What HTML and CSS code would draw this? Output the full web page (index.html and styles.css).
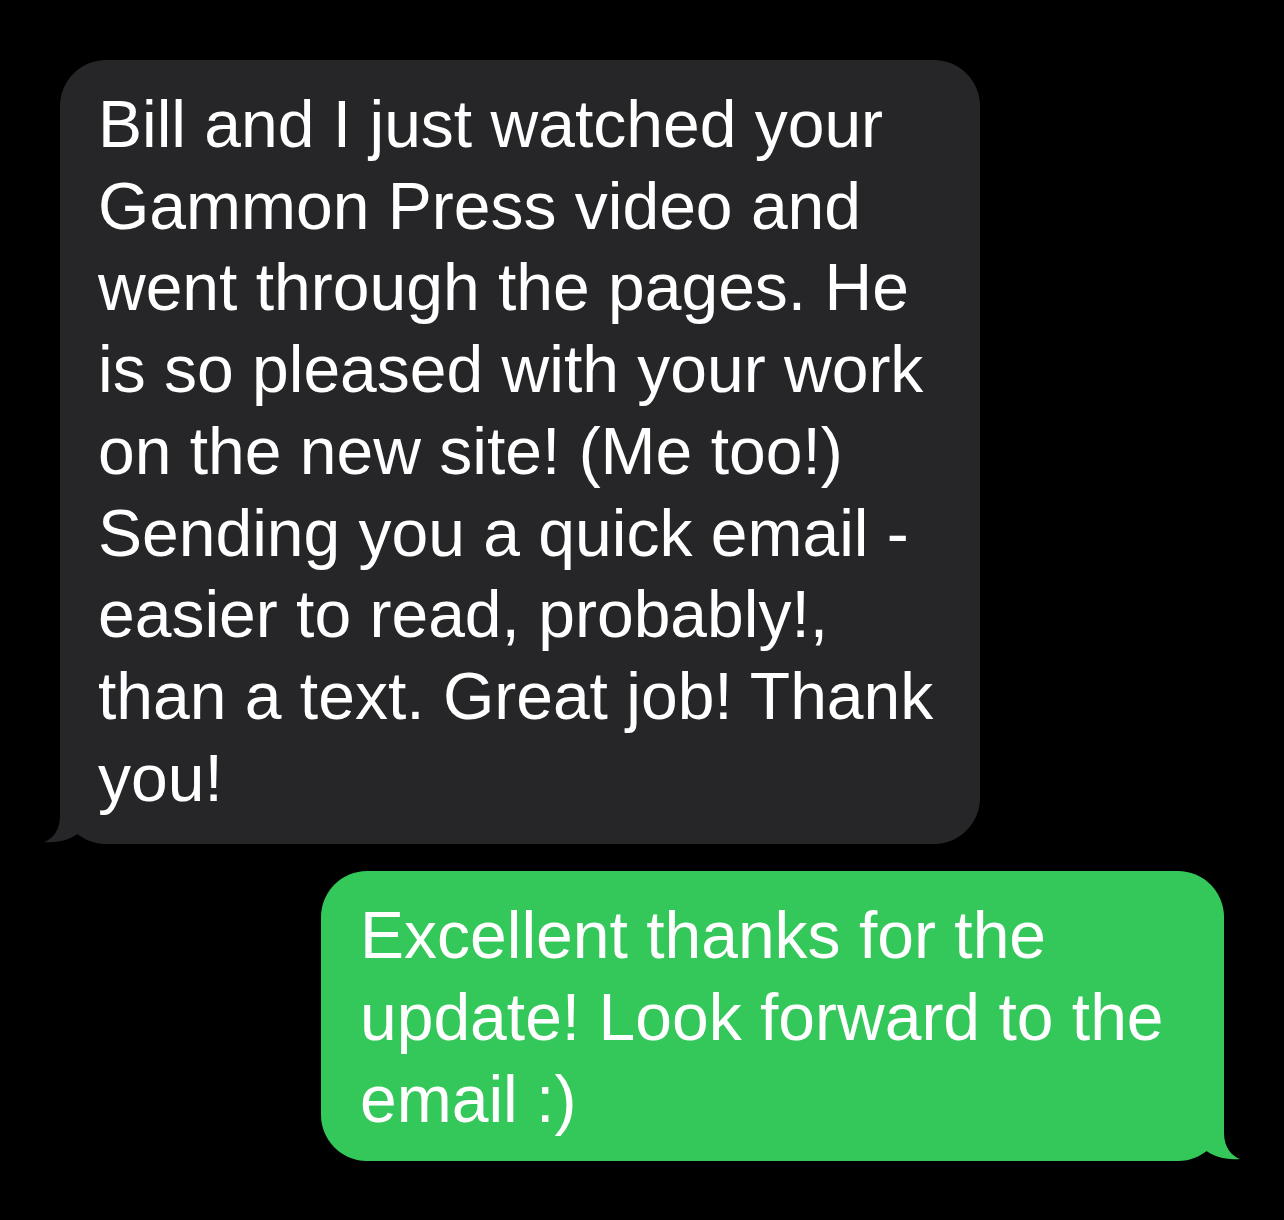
FILE: index.html
```html
<!DOCTYPE html>
<html lang="en">
<head>
<meta charset="utf-8">
<title>Messages</title>
<link rel="stylesheet" href="styles.css">
</head>
<body>
<main class="thread">
  <div class="bubble received">
    <p class="msg">Bill and I just watched your<br>Gammon Press video and<br>went through the pages. He<br>is so pleased with your work<br>on the new site! (Me too!)<br>Sending you a quick email -<br>easier to read, probably!,<br>than a text. Great job! Thank<br>you!</p>
    <svg class="tail tail-left" width="80" height="45" viewBox="0 0 80 45" aria-hidden="true"><path d="M16 0 L16 17 C16 32 8 40 0 43 C14 44.5 28 40 36 33 C44 40 56 45 70 45 L80 45 L80 0 Z"/></svg>
  </div>
  <div class="bubble sent">
    <p class="msg">Excellent thanks for the<br>update! Look forward to the<br>email :)</p>
    <svg class="tail tail-right" width="80" height="45" viewBox="0 0 80 45" aria-hidden="true"><path d="M16 0 L16 17 C16 32 8 40 0 43 C14 44.5 28 40 36 33 C44 40 56 45 70 45 L80 45 L80 0 Z"/></svg>
  </div>
</main>
</body>
</html>
```
FILE: styles.css
```css
html, body {
  margin: 0;
  padding: 0;
  background: #000;
}
body {
  width: 1284px;
  height: 1220px;
  overflow: hidden;
  font-family: "Liberation Sans", Arial, sans-serif;
}
.thread {
  display: flex;
  flex-direction: column;
  gap: 27px;
  padding: 60px 60px 0 60px;
}
.bubble {
  position: relative;
  box-sizing: border-box;
  border-radius: 46px;
  color: #fff;
}
.msg {
  margin: 0;
  font-size: 66px;
  line-height: 81.7px;
  position: relative;
  z-index: 1;
}
.received {
  align-self: flex-start;
  width: 920px;
  background: #262628;
  padding: 24px 40px 25px 38px;
}
.sent {
  align-self: flex-end;
  width: 903px;
  background: #34c759;
  padding: 24px 40px 21px 39px;
}
.tail {
  position: absolute;
  bottom: 0;
}
.tail-left {
  left: -16px;
  fill: #262628;
}
.tail-right {
  right: -16px;
  fill: #34c759;
  transform: scaleX(-1);
}
```
